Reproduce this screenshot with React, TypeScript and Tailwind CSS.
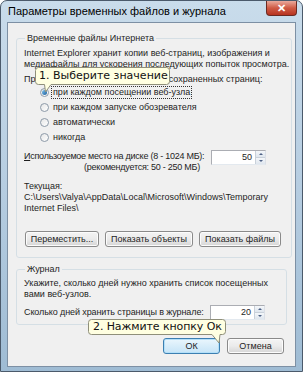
import React from "react"

const FONT = { fontFamily: '"Liberation Sans", Arial, sans-serif' }
const TIP = { fontFamily: '"DejaVu Sans", sans-serif' }

const Radio = ({ checked, label, focus }: { checked?: boolean; label: string; focus?: boolean }) => (
  <div className="flex items-center h-[15px] pl-[16px]">
    <span className="w-[9px] h-[9px] rounded-full border border-[#8d9aa8] bg-gradient-to-br from-[#e6e6e6] to-[#ffffff] flex items-center justify-center">
      {checked && <span className="w-[5px] h-[5px] rounded-full bg-gradient-to-br from-[#7fc4f0] to-[#1a5f9c]" />}
    </span>
    <span className={"ml-[3px] px-[1px] leading-[11px] whitespace-nowrap " + (focus ? "outline outline-1 outline-dotted outline-[#333]" : "")}>
      {label}
    </span>
  </div>
)

const Spinner = ({ value }: { value: string }) => (
  <div className="flex w-[55px] h-[15px] shrink-0 border border-[#abadb3] border-b-[#e3e9ef] border-r-[#dbdfe6] bg-white">
    <div className="flex-1 text-right pr-[3px] leading-[13px]">{value}</div>
    <div className="w-[10px] flex flex-col border-l border-[#c9d1da]">
      <div className="flex-1 flex items-center justify-center bg-gradient-to-b from-[#f4f7fa] to-[#dfe6ee] border-b border-[#c9d1da]">
        <span className="w-0 h-0 border-l-[2px] border-r-[2px] border-b-[2px] border-l-transparent border-r-transparent border-b-[#4d6185]" />
      </div>
      <div className="flex-1 flex items-center justify-center bg-gradient-to-b from-[#f4f7fa] to-[#dfe6ee]">
        <span className="w-0 h-0 border-l-[2px] border-r-[2px] border-t-[2px] border-l-transparent border-r-transparent border-t-[#4d6185]" />
      </div>
    </div>
  </div>
)

const Btn = ({ label, w, primary }: { label: string; w: string; primary?: boolean }) => (
  <div
    className={
      "h-[16px] rounded-[3px] border flex items-center justify-center leading-[11px] whitespace-nowrap " +
      w +
      (primary
        ? " border-[#3c7fb1] bg-gradient-to-b from-[#eaf6fd] to-[#c6e4f7] shadow-[inset_0_0_0_1px_#b3e0f9]"
        : " border-[#8a8a8a] bg-gradient-to-b from-[#f4f4f4] via-[#ebebeb] to-[#d5d5d5] shadow-[inset_0_0_0_1px_#fcfcfc]")
    }
  >
    {label}
  </div>
)

export default function App() {
  return (
    <div
      className="w-[303px] h-[372px] rounded-t-[7px] border border-[#4b5a6b] bg-gradient-to-b from-[#c9dceb] via-[#b6cde1] to-[#9fbcd4] flex flex-col overflow-hidden text-[9px] text-[#1e1e1e]"
      style={FONT}
    >
      <div className="h-[21px] flex items-start justify-between shrink-0">
        <span className="pl-[7px] pt-[4px] text-[11px] leading-[13px] text-black whitespace-nowrap">Параметры временных файлов и журнала</span>
        <div className="mr-[5px] w-[31px] h-[15px] rounded-b-[4px] border border-t-0 border-[#6b2a22] bg-gradient-to-b from-[#e9a99c] via-[#cf5a44] to-[#b7321f] flex items-center justify-center">
          <span className="text-white text-[11px] font-bold leading-[11px]">✕</span>
        </div>
      </div>

      <div className="relative mx-[6px] h-[345px] border border-[#7d90a4] bg-[#f0f0f0] flex flex-col">
        <fieldset className="mt-[9px] mx-[8px] border border-[#d5dfe5] rounded-[3px] pl-[7px] pr-[2px] pb-[10px] whitespace-nowrap">
          <legend className="px-[2px] ml-[1px] leading-[12px]">Временные файлы Интернета</legend>
          <p className="mt-[4px] leading-[11px]">
            Internet Explorer хранит копии веб-страниц, изображения и
            <br />
            медиафайлы для ускорения последующих попыток просмотра.
          </p>
          <p className="mt-[4px] leading-[11px]">Проверять наличие новых версий сохраненных страниц:</p>
          <div className="flex flex-col">
            <Radio checked focus label="при каждом посещении веб-узла" />
            <Radio label="при каждом запуске обозревателя" />
            <Radio label="автоматически" />
            <Radio label="никогда" />
          </div>
          <div className="mt-[5px] flex items-start">
            <div className="flex flex-col items-end leading-[11px] w-[176px] min-w-0 shrink-0 pt-[1px] tracking-[-0.25px]">
              <span className="self-start"><u>И</u>спользоуемое место на диске (8 - 1024 МБ):</span>
              <span>(рекомендуется: 50 - 250 МБ)</span>
            </div>
            <div className="ml-[11px]">
              <Spinner value="50" />
            </div>
          </div>
          <p className="mt-[8px] leading-[11px]">Текущая:</p>
          <p className="leading-[11px]">
            C:\Users\Valya\AppData\Local\Microsoft\Windows\Temporary
            <br />
            Internet Files\
          </p>
          <div className="mt-[17px] flex gap-[6px] pl-[1px]">
            <Btn label="Переместить..." w="w-[74px]" />
            <Btn label="Показать объекты" w="w-[88px]" />
            <Btn label="Показать файлы" w="w-[82px]" />
          </div>
        </fieldset>

        <fieldset className="mt-[5px] mx-[8px] border border-[#d5dfe5] rounded-[3px] pl-[7px] pr-[2px] pb-[4px] whitespace-nowrap">
          <legend className="px-[2px] ml-[1px] leading-[12px]">Журнал</legend>
          <p className="mt-[3px] leading-[11px]">
            Укажите, сколько дней нужно хранить список посещенных
            <br />
            вами веб-узлов.
          </p>
          <div className="mt-[5px] flex items-center">
            <span className="w-[186px] shrink-0 leading-[11px] tracking-[-0.1px]">Сколько дней хранить страницы в журнале:</span>
            <Spinner value="20" />
          </div>
        </fieldset>

        <div className="mt-[13px] flex justify-end gap-[7px] pr-[11px]">
          <Btn label="ОК" w="w-[57px]" primary />
          <Btn label="Отмена" w="w-[57px]" />
        </div>

        <div className="absolute left-[27px] top-[44px] w-[135px] h-[26px]">
          <svg className="absolute inset-0" width="135" height="26" viewBox="0 0 135 26">
            <path
              d="M3.5 0.5 H131.5 Q134.5 0.5 134.5 3.5 V14.5 Q134.5 17.5 131.5 17.5 H16 L10.5 25 L9.5 17.5 H3.5 Q0.5 17.5 0.5 14.5 V3.5 Q0.5 0.5 3.5 0.5 Z"
              fill="#ffffe1"
              stroke="#8f8f7a"
            />
          </svg>
          <div className="relative pl-[4px] h-[18px] flex items-center text-[11px] text-[#111] whitespace-nowrap" style={TIP}>
            1. Выберите значение
          </div>
        </div>

        <div className="absolute left-[80px] top-[296px] w-[138px] h-[25px]">
          <svg className="absolute inset-0" width="138" height="25" viewBox="0 0 138 25">
            <path
              d="M3.5 0.5 H134.5 Q137.5 0.5 137.5 3.5 V12.5 Q137.5 15.5 134.5 15.5 H132 L131 24 L124 15.5 H3.5 Q0.5 15.5 0.5 12.5 V3.5 Q0.5 0.5 3.5 0.5 Z"
              fill="#ffffe1"
              stroke="#8f8f7a"
            />
          </svg>
          <div className="relative pl-[5px] h-[16px] flex items-center text-[11px] tracking-[-0.1px] text-[#111] whitespace-nowrap" style={TIP}>
            2. Нажмите кнопку Ок
          </div>
        </div>
      </div>
    </div>
  )
}
